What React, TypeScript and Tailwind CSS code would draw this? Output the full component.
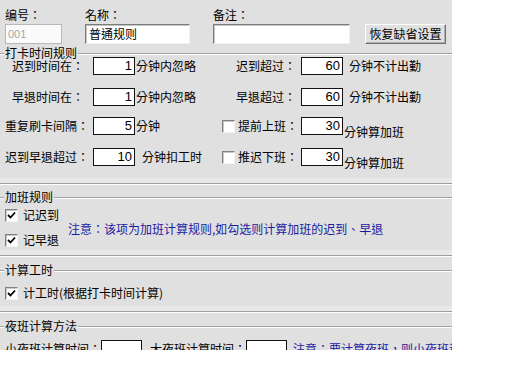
import React from 'react';

const cjk = "[font-family:'Noto_Sans_CJK_TC','Noto_Sans_CJK_SC','Noto_Sans',sans-serif]";
const sans = "[font-family:'Liberation_Sans',Arial,sans-serif]";

// 数字输入框
function NumBox({ v, w = 'w-[42px]' }: { v: string; w?: string }) {
  return (
    <div className={`${w} h-[18px] shrink-0 bg-white border border-[#111] text-right pr-[2px] text-[13px] leading-[16px] ${sans}`}>
      {v}
    </div>
  );
}

// 复选框
function Check({ checked = false }: { checked?: boolean }) {
  return (
    <div className="w-[13px] h-[13px] shrink-0 bg-white border border-t-[#808080] border-l-[#808080] border-b-[#f4f4f4] border-r-[#f4f4f4] shadow-[inset_1px_1px_0_#c8c8c8] flex items-center justify-center">
      {checked && (
        <svg width="9" height="9" viewBox="0 0 9 9">
          <path d="M1 4 L3.5 6.5 L8 1.5" fill="none" stroke="#000" strokeWidth="1.8" />
        </svg>
      )}
    </div>
  );
}

// 分组框
function Group({ title, children, className = '' }: { title: string; children: React.ReactNode; className?: string }) {
  return (
    <div className={`relative border-t border-[#a0a0a0] shadow-[inset_0_1px_0_#fff] ${className}`}>
      <span className="absolute left-[4px] -top-[8px] bg-[#e0e0e0] px-[1px] leading-[14px]">{title}</span>
      {children}
    </div>
  );
}

function Sep() {
  return (
    <>
      <div className="h-[5px] bg-[#e8e8e8]" />
      <div className="h-px bg-[#9c9c9c]" />
      <div className="h-px bg-white" />
    </>
  );
}

function RuleRow({
  left, leftPad = '', leftVal, leftSuffix, suffixGap = 'ml-[1px]',
  check = false, right, rightVal, rightSuffix, lowSuffix = false, className = '',
}: {
  left: string; leftPad?: string; leftVal: string; leftSuffix: string; suffixGap?: string;
  check?: boolean; right: string; rightVal: string; rightSuffix: string; lowSuffix?: boolean; className?: string;
}) {
  return (
    <div className={`flex h-[18px] items-center px-[5px] ${className}`}>
      <div className="flex w-[217px] items-center">
        <span className={`w-[88px] leading-[14px] whitespace-nowrap ${leftPad}`}>{left}</span>
        <NumBox v={leftVal} />
        <span className={`${suffixGap} leading-[14px] whitespace-nowrap`}>{leftSuffix}</span>
      </div>
      <div className="flex w-[79px] items-center">
        {check ? <div className="mr-[3px]"><Check /></div> : <div className="w-[14px]" />}
        <span className="leading-[14px] whitespace-nowrap">{right}</span>
      </div>
      <NumBox v={rightVal} />
      <span className={`leading-[14px] whitespace-nowrap ${lowSuffix ? 'self-start mt-[8px] ml-[1px]' : 'ml-[6px]'}`}>{rightSuffix}</span>
    </div>
  );
}

export default function App() {
  return (
    <div className={`w-[512px] h-[384px] bg-white text-[12px] text-black ${cjk}`}>
      <div className="w-[452px] h-[350px] overflow-hidden bg-[#e0e0e0]">
        {/* 顶部：编号 / 名称 / 备注 */}
        <div className="flex items-end px-[5px] pt-[8px]">
          <div className="w-[57px] mr-[23px]">
            <div className="h-[14px] leading-[14px] mb-[2px]">编号：</div>
            <div className={`h-[20px] bg-[#fafafa] border border-[#b8b8b8] pl-[2px] text-[11px] leading-[18px] text-[#a8a8a8] ${sans}`}>001</div>
          </div>
          <div className="w-[105px] mr-[23px]">
            <div className="h-[14px] leading-[14px] mb-[2px]">名称：</div>
            <div className="h-[20px] bg-white border border-t-[#7c7c7c] border-l-[#7c7c7c] border-b-[#f2f2f2] border-r-[#f2f2f2] shadow-[inset_1px_1px_0_#c4c4c4] pl-[3px] leading-[18px]">普通规则</div>
          </div>
          <div className="w-[137px] mr-[15px]">
            <div className="h-[14px] leading-[14px] mb-[2px]">备注：</div>
            <div className="h-[20px] bg-white border border-t-[#7c7c7c] border-l-[#7c7c7c] border-b-[#f2f2f2] border-r-[#f2f2f2] shadow-[inset_1px_1px_0_#c4c4c4]" />
          </div>
          <div className="w-[81px] h-[20px] bg-[#e0e0e0] border border-t-white border-l-white border-b-[#707070] border-r-[#707070] shadow-[inset_-1px_-1px_0_#b0b0b0] flex items-center justify-center leading-[14px] whitespace-nowrap">
            恢复缺省设置
          </div>
        </div>

        {/* 打卡时间规则 */}
        <Group title="打卡时间规则" className="mt-[9px]">
          <div className="pt-[3px] pb-[12px]">
            <RuleRow left="迟到时间在：" leftPad="pl-[7px]" leftVal="1" leftSuffix="分钟内忽略"
              right="迟到超过：" rightVal="60" rightSuffix="分钟不计出勤" />
            <RuleRow className="mt-[13px]" left="早退时间在：" leftPad="pl-[7px]" leftVal="1" leftSuffix="分钟内忽略"
              right="早退超过：" rightVal="60" rightSuffix="分钟不计出勤" />
            <RuleRow className="mt-[11px]" left="重复刷卡间隔：" leftVal="5" leftSuffix="分钟"
              check right="提前上班：" rightVal="30" rightSuffix="分钟算加班" lowSuffix />
            <RuleRow className="mt-[13px]" left="迟到早退超过：" leftVal="10" leftSuffix="分钟扣工时" suffixGap="ml-[7px]"
              check right="推迟下班：" rightVal="30" rightSuffix="分钟算加班" lowSuffix />
          </div>
          <Sep />
        </Group>

        {/* 加班规则 */}
        <Group title="加班规则" className="mt-[12px]">
          <div className="flex pt-[10px] pb-[3px] px-[5px]">
            <div className="w-[63px]">
              <div className="flex h-[14px] items-center gap-[5px]">
                <Check checked />
                <span className="leading-[14px]">记迟到</span>
              </div>
              <div className="flex h-[14px] items-center gap-[5px] mt-[11px]">
                <Check checked />
                <span className="leading-[14px]">记早退</span>
              </div>
            </div>
            <div className="self-center mt-[3px] leading-[14px] text-[#1c1ca0] whitespace-nowrap">
              注意：该项为加班计算规则,如勾选则计算加班的迟到、早退
            </div>
          </div>
          <Sep />
        </Group>

        {/* 计算工时 */}
        <Group title="计算工时" className="mt-[13px]">
          <div className="pt-[15px] pb-[6px] px-[5px]">
            <div className="flex h-[14px] items-center gap-[5px]">
              <Check checked />
              <span className="leading-[14px]">计工时(根据打卡时间计算)</span>
            </div>
          </div>
          <Sep />
        </Group>

        {/* 夜班计算方法 */}
        <Group title="夜班计算方法" className="mt-[13px]">
          <div className="flex h-[18px] items-center px-[5px] mt-[13px] whitespace-nowrap">
            <span className="w-[96px] leading-[14px]">小夜班计算时间：</span>
            <NumBox v="" w="w-[41px]" />
            <span className="ml-[8px] w-[96px] leading-[14px]">大夜班计算时间：</span>
            <NumBox v="" w="w-[41px]" />
            <span className="ml-[6px] leading-[14px] text-[#1c1ca0]">注意：要计算夜班，则小夜班和大夜班时间必须设置</span>
          </div>
        </Group>
      </div>
    </div>
  );
}
